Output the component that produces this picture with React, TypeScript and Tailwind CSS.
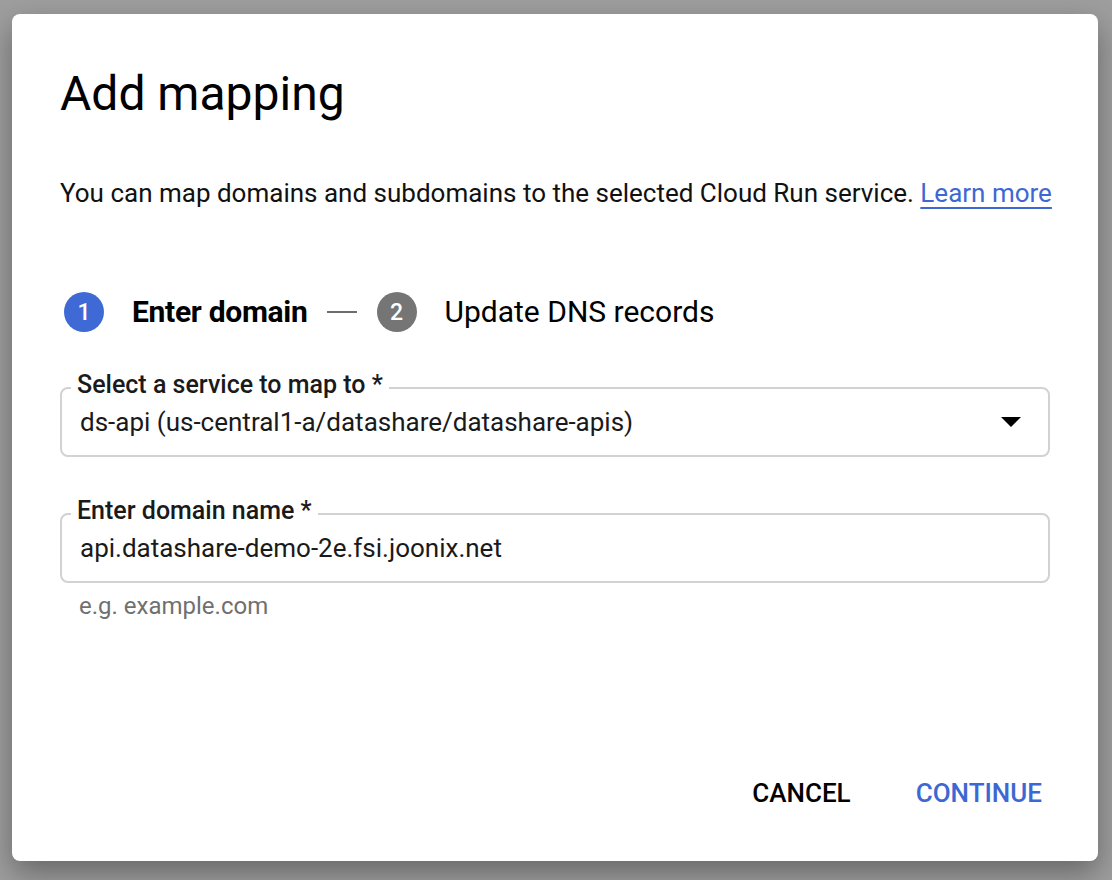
import React from 'react';

const Field: React.FC<{ label: string; value: string; select?: boolean }> = ({ label, value, select }) => (
  <div className="relative">
    <div className="flex h-[70px] items-center rounded-[8px] border-2 border-[#d2d2d2] pl-[18px] pr-[24px]">
      <span className="flex-1 text-[26px] text-[#1a1a1a]">{value}</span>
      {select && (
        <svg width="20" height="10" viewBox="0 0 20 10" className="mr-[3px]">
          <path d="M0 0 L20 0 L10 10 Z" fill="#000" />
        </svg>
      )}
    </div>
    <span className="absolute left-[11px] top-[-17px] bg-white px-[6px] text-[25px] font-medium leading-[30px] text-[#1a1a1a]">
      {label}
    </span>
  </div>
);

const App: React.FC = () => {
  return (
    <div className="h-[880px] w-[1112px] bg-[#9e9e9e] pl-[12px] pt-[14px] font-['Roboto',sans-serif]">
      <div className="flex h-[847px] w-[1086px] flex-col rounded-[8px] bg-white px-[48px] shadow-[0_12px_30px_rgba(0,0,0,0.35)]">
        <h1 className="mt-[52px] text-[48px] leading-[56px] text-black">Add mapping</h1>

        <p className="mt-[55px] whitespace-nowrap text-[26px] leading-[32px] text-[#111]">
          You can map domains and subdomains to the selected Cloud Run service.{' '}
          <a className="text-[#3d68d4] underline underline-offset-[5px]" href="#">
            Learn more
          </a>
        </p>

        <div className="mt-[80px] flex items-center">
          <span className="ml-[4px] flex h-[40px] w-[40px] items-center justify-center rounded-full bg-[#3f6ad6] pt-[2px] text-[23px] font-medium leading-none text-white">
            1
          </span>
          <span className="ml-[28px] text-[30px] font-bold tracking-[-0.3px] text-black">Enter domain</span>
          <span className="ml-[19px] h-[2px] w-[30px] bg-[#6d6d6d]" />
          <span className="ml-[20px] flex h-[40px] w-[40px] items-center justify-center rounded-full bg-[#757575] pt-[2px] text-[23px] font-medium leading-none text-white">
            2
          </span>
          <span className="ml-[28px] text-[30px] text-black">Update DNS records</span>
        </div>

        <div className="mt-[53px] flex flex-col gap-[56px]">
          <Field label="Select a service to map to *" value="ds-api (us-central1-a/datashare/datashare-apis)" select />
          <div>
            <Field label="Enter domain name *" value="api.datashare-demo-2e.fsi.joonix.net" />
            <p className="mt-[5px] pl-[19px] text-[24px] text-[#707070]">e.g. example.com</p>
          </div>
        </div>

        <div className="mt-auto mb-[48px] flex justify-end gap-[65px] pr-[8px]">
          <button className="text-[26px] font-medium text-black">CANCEL</button>
          <button className="text-[26px] font-medium text-[#3d68d4]">CONTINUE</button>
        </div>
      </div>
    </div>
  );
};

export default App;
